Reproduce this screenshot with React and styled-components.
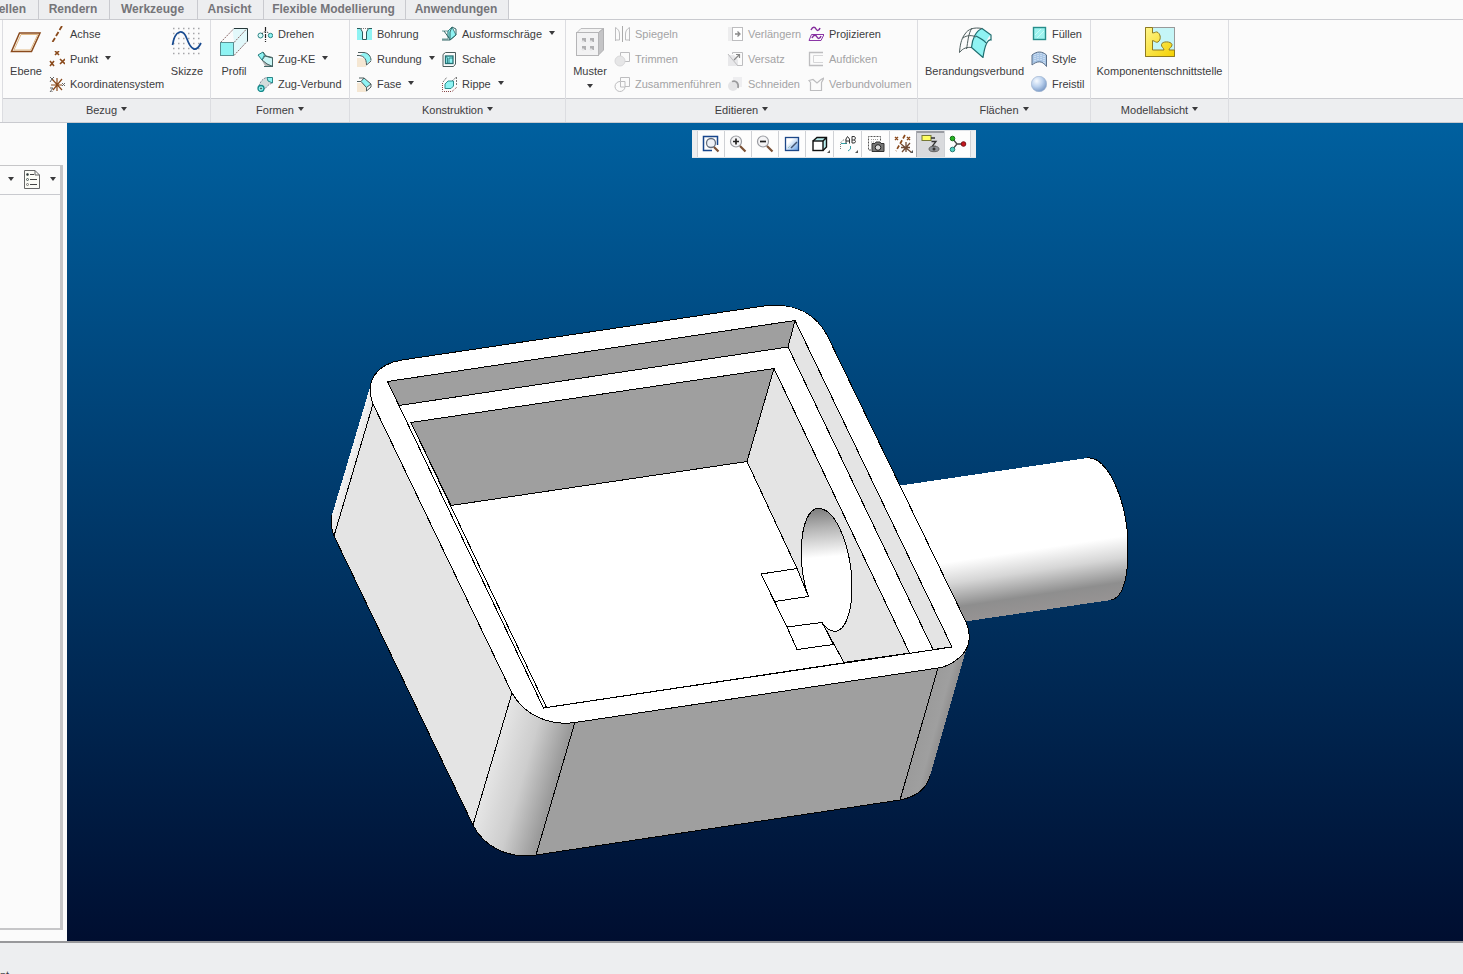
import React from 'react';
import styled, { createGlobalStyle, css } from 'styled-components';

const GlobalStyle = createGlobalStyle`
  * { box-sizing: border-box; }
  body {
    margin: 0;
    font-family: "Liberation Sans", Arial, sans-serif;
    font-size: 11px;
    color: #3c3c3e;
    background: #fbfbfb;
  }
  button { font: inherit; color: inherit; border: 0; padding: 0; margin: 0; background: none; }
  svg { display: block; flex: none; }
`;

const line = '#c9cacf';
const panel = '#edeef0';
const paper = '#fbfbfb';

const Window = styled.div`
  display: flex;
  flex-direction: column;
  height: 100vh;
  overflow: hidden;
`;

/* ---------- tabs ---------- */
const TabBar = styled.nav`
  display: flex;
  flex: none;
  height: 20px;
  border-bottom: 1px solid ${line};
  background: ${paper};
`;
const Tab = styled.button`
  flex: none;
  width: ${(p) => p.$width}px;
  height: 19px;
  padding: 0 ${(p) => (p.$cut ? 12 : 2)}px 2px 0;
  display: flex;
  align-items: center;
  justify-content: ${(p) => (p.$cut ? 'flex-end' : 'center')};
  border-right: 1px solid ${line};
  background: ${panel};
  color: #757579;
  font-size: 12px;
  font-weight: bold;
  white-space: nowrap;
`;

/* ---------- ribbon ---------- */
const Ribbon = styled.header`
  display: flex;
  flex: none;
  height: 103px;
  padding-left: 2px;
  background: ${paper};
  border-bottom: 1px solid ${line};
`;
const Group = styled.section`
  flex: none;
  display: flex;
  flex-direction: column;
  width: ${(p) => p.$width}px;
  border-right: 1px solid #dcdde1;
  &:first-child { border-left: 1px solid #dcdde1; }
`;
const GroupBody = styled.div`
  display: flex;
  height: 78px;
  padding: 1px 0 0 ${(p) => p.$indent || 0}px;
`;
const GroupLabel = styled.button`
  flex: 1;
  display: flex;
  align-items: center;
  justify-content: center;
  gap: 4px;
  padding-bottom: 2px;
  border-top: 1px solid ${line};
  background: ${panel};
`;
const RibbonRest = styled.div`
  flex: 1;
  margin-top: 78px;
  border-top: 1px solid ${line};
  background: ${panel};
`;
const Big = styled.button`
  flex: none;
  width: ${(p) => p.$width}px;
  display: flex;
  flex-direction: column;
  align-items: center;
  padding-top: 5px;
  gap: 6px;
  line-height: 14px;
  white-space: nowrap;
`;
const Column = styled.div`
  flex: none;
  width: ${(p) => p.$width}px;
  display: grid;
  grid-template-rows: repeat(3, 25px);
`;
const Small = styled.button`
  display: flex;
  align-items: center;
  gap: 5px;
  white-space: nowrap;
  ${(p) => p.disabled && css`color: #a3a3a5;`}
`;
const Caret = styled.span`
  width: 0;
  height: 0;
  margin: 0 0 2px ${(p) => p.$gap || 0}px;
  border: 3px solid transparent;
  border-top: 4px solid #3a3a3c;
  border-bottom: 0;
`;

/* ---------- work area ---------- */
const Work = styled.main`
  flex: 1;
  min-height: 0;
  display: flex;
`;
const Side = styled.aside`
  flex: none;
  width: 67px;
  padding: 42px 4px 11px 0;
  display: flex;
`;
const Tree = styled.div`
  flex: 1;
  border: solid #c6c6c8;
  border-width: 1px 3px 2px 0;
`;
const TreeTools = styled.div`
  height: 29px;
  display: flex;
  align-items: center;
  padding: 0 0 1px 8px;
  border-bottom: 1px solid ${line};
`;
const TreeButton = styled.button`
  display: flex;
  align-items: center;
  gap: 10px;
  & + & { margin-left: 10px; }
`;
const Viewport = styled.div`
  flex: 1;
  min-width: 0;
  position: relative;
  background: linear-gradient(#00609f, #000e30);
  & > svg { width: 100%; height: 100%; }
`;
const ViewTools = styled.div`
  position: absolute;
  top: 7px;
  left: 625px;
  height: 28px;
  display: flex;
  padding: 0 5px;
  background: ${panel};
  border: solid #dfe3e8;
  border-width: 1px 0;
`;
const ViewTool = styled.button`
  position: relative;
  width: ${(p) => (p.$wide ? 28 : 27)}px;
  display: flex;
  align-items: center;
  justify-content: center;
  border-left: 1px solid #cfd1d5;
  background: #fdfdfd;
  &:last-child { border-right: 1px solid #cfd1d5; }
  ${(p) => p.$active && css`
    background: #d9dadd;
    box-shadow: inset 0 2px 0 #9a9ca2;
    border-left-color: #a8aab0;
  `}
  ${(p) => p.$menu && css`
    &::after {
      content: "";
      position: absolute;
      right: 3px;
      bottom: 4px;
      border: solid transparent;
      border-width: 0 0 3px 3px;
      border-bottom-color: #555;
    }
  `}
`;
const Status = styled.footer`
  flex: none;
  height: 33px;
  padding-top: 26px;
  border-top: 2px solid #98989b;
  background: ${panel};
  overflow: hidden;
  line-height: 12px;
`;

/* ---------- icons ---------- */
const S = ({ size = 16, w, h, children }) => (
  <svg width={w || size} height={h || size} viewBox={`0 0 ${w || size} ${h || size}`} fill="none" stroke="#4c5c5c" strokeWidth="1" aria-hidden="true">
    {children}
  </svg>
);
const brown = '#8a4a1c';
const cyan = '#8ff3f3';
const g = '#bdbdbf';

const icons = {
  ebene: <S w={32} h={32}><path d="M9.500 7H30L21.500 25.500H1.500Z" stroke={brown} strokeWidth="1.500" /><path d="M11 8.500H27.800L20.500 24H4Z" stroke="#e0b884" strokeWidth="1" /></S>,
  achse: <S><path d="M13 0L10.500 4M9.500 6L7 10M6 12L3.500 16" stroke={brown} strokeWidth="1.800" /></S>,
  punkt: <S><path d="M6 0l4 4M10 0l-4 4M1 10l4 5M5 10l-4 5M11 8l5 5M16 8l-5 5" stroke={brown} strokeWidth="1.600" /></S>,
  koord: <S><path d="M3 3L13 14M13 3L4 14M2 9H13M8 2V15" stroke={brown} strokeWidth="1.200" /><path d="M1 1l2 2l2-2M3 3l-2 3M13 7l3 3M16 7l-3 3M1 12h3l-3 4h3" stroke="#666" /></S>,
  skizze: <S w={32} h={32}>
    {[2, 7, 12, 17, 22, 27].map((y) => <path key={y} d={`M2 ${y + .5}H31`} stroke="#a6a6aa" strokeDasharray="1.500 3.500" strokeWidth="1.500" />)}
    <path d="M1.500 19C4 4 12 2 16 13S25 27 30 17" stroke="#174a90" strokeWidth="1.700" /></S>,
  profil: <S w={32} h={32}><path d="M14.500 2.500H29.500V16L16 29V16.500Z" fill="#e2f8fa" stroke="none" /><path d="M2.500 16.500L16 2.500M16 16.500L29 2.500M16 29.500L29 15.500" stroke="#8b6b6b" strokeDasharray="2 1" /><path d="M16 2.500H29.500V15.500" stroke="#26383a" /><rect x="2.500" y="16.500" width="13" height="13" fill={cyan} stroke="#5a8f92" /></S>,
  drehen: <S><path d="M8.500 1V16" stroke="#222" strokeWidth="1.200" strokeDasharray="4 1 1 1" /><circle cx="3.500" cy="9.500" r="2.500" fill="#d8fafa" stroke="#2c8585" /><circle cx="13.500" cy="9.500" r="2.200" fill={cyan} stroke="#2c8585" /><path d="M5 8C6 5 11 5 12 8" stroke="#444" strokeDasharray="2 1" /></S>,
  zugke: <S><path d="M5 9L8 5L15.500 7V15.500L9 13Z" fill="#c9f5f5" /><path d="M4 8L11 13L15 15L8 15Z" fill="#b8b8b8" stroke="none" /><path d="M1 4L6 1L7.500 4L5 9Z" fill={cyan} stroke="#287f80" /><path d="M6 1L9 5L15.500 6.500V15.500L10 13L5 9M7 15.500h9" stroke="#466" /></S>,
  zugverb: <S><path d="M2 10C3 6 6 2 10 1.500H15.500V7C12 8 9 11 8 13Z" fill="#d4dcdc" stroke="#889" strokeDasharray="2 1" /><path d="M10 1.500H15.500V7L11 5Z" fill={cyan} stroke="#2a8788" /><circle cx="4" cy="12.500" r="3" fill={cyan} stroke="#16898a" strokeWidth="1.300" /><circle cx="4" cy="12.500" r=".6" fill="#144" /></S>,
  bohrung: <S><path d="M1 3H5L6 6V13H10.500V6L12 3H16V14H1Z" fill={cyan} stroke="none" /><path d="M6.500 6V13H10.500V6L12 3H5Z" fill="#fbfbfb" stroke="none" /><path d="M1 2.500H4.500L6.500 6V13.500H10.500V6L12.500 2.500H16" stroke="#2a5c5c" /><path d="M5 2.500H12" stroke="#777" strokeDasharray="1 1" /></S>,
  rundung: <S><path d="M1 7H7L10 10V16H1Z" fill="#f5e7d3" stroke="none" /><path d="M4 4L8 1.500C12 2 15 5 15 9L10.500 13C10.500 9 9 5 4 4Z" fill={cyan} stroke="none" /><path d="M2 1.500H8C12 2 15 5 15 9.500M1 4.500C7 4 10.500 7 10.500 14L15 10" /></S>,
  fase: <S><path d="M1 7H6L10 11V16H1Z" fill="#f5e7d3" stroke="none" /><path d="M5 5L8 2L15 8L10 12Z" fill={cyan} stroke="none" /><path d="M1 5.500H5L10.500 11.500V15L15 11V8L8 2H3M10.500 11.500L15 8M5 5.500L8 2" /></S>,
  auform: <S><path d="M1 5H7V13H1" stroke="#6a9a9a" /><path d="M7 5L11 1L15 9L9 14L7 10Z" fill={cyan} stroke="#3f8587" /><path d="M11 1L9 6V14M1 14H9L15 9M3 5L8 12M11 1L15 3V9" stroke="#366" /></S>,
  schale: <S><path d="M2 3.500L4.500 1.500H14.500V13L12.500 15.500H2Z" /><rect x="4.500" y="5" width="7.500" height="7.500" fill={cyan} stroke="#256f72" strokeWidth="1.300" /><path d="M6.500 12V7L4.500 5M12 7H8V12" stroke="#256f72" strokeWidth=".8" /></S>,
  rippe: <S><path d="M1.500 7V15.500H11L16 11" stroke="#844" strokeDasharray="1 1" /><path d="M2 6L6 1M15.500 1V10M11 5L15.500 1" stroke="#777" strokeDasharray="2 1" /><path d="M4 8L7 5H12.500V10L10 12.500H4Z" fill={cyan} stroke="#2c8f90" /></S>,
  muster: <S w={32} h={32}><path d="M2.500 7L7 2.500H29.500L24 7Z" fill="#f3f3f3" stroke={g} /><path d="M24 7L29.500 2.500V24L24 29.500Z" fill="#c4c4c6" stroke="#b0b0b2" /><rect x="2.500" y="6.500" width="22" height="23" fill="#f2f2f3" stroke="#b5b5b7" /><path d="M8 14h4M16 14h4M8 22h4M16 22h4" stroke="#b0b0b2" strokeWidth="4" /><path d="M8 15h2v1h-2zM16 15h2v1h-2zM8 23h2v1h-2zM16 23h2v1h-2z" fill="#eee" stroke="#e4e4e6" /></S>,
  spiegeln: <S><path d="M8.500 0V16" stroke="#aaa" /><path d="M1.500 15V1.500C4 3 5.500 5 5.500 8V14H1.500M15.500 15V1.500C13 3 11.500 5 11.500 8V14H15.500" stroke={g} /></S>,
  trimmen: <S><path d="M6.500 5V1.500H15.500V10.500H10" stroke={g} /><circle cx="6" cy="10" r="5" fill="#e6e6e7" stroke="#d8d8da" /></S>,
  zusammen: <S><path d="M6.500 5.500V1.500H15.500V10.500H11M6.500 5.500H11V10.500" stroke={g} /><path d="M6 5.500A5 5 0 1 0 11 11H6.500V5.500" stroke={g} /></S>,
  verlaengern: <S><rect x="1" y="1" width="6" height="14" fill="#ededee" stroke="none" /><rect x="5.500" y="1.500" width="10" height="13" stroke={g} fill="#fff" /><path d="M8 8H12M10.500 5.500L13 8L10.500 10.500" stroke="#888" strokeWidth="1.300" /></S>,
  versatz: <S><path d="M1 4H7L11 9V15H1Z" fill="#e8e8ea" stroke="none" /><path d="M5.500 3V1.500H15.500V14.500H11M1 3l4 5l6 7" stroke={g} /><path d="M7 9L12 4M9 3.500H12.500V7" stroke="#888" strokeWidth="1.200" /></S>,
  schneiden: <S><rect x="6" y="1" width="9" height="10" fill="#eeeef0" stroke="none" /><circle cx="6" cy="10" r="5" fill="#e4e4e6" stroke="none" /><path d="M5 5.500C9 4 12 7 11 12" stroke="#9a9a9c" strokeWidth="1.700" /></S>,
  projizieren: <S><path d="M3 4C5 0 7 1 8 3S11 5 12 2" stroke="#842c9c" strokeWidth="1.500" /><path d="M3.500 8.500H16L13 14.500H1Z" stroke="#8a35a6" /><path d="M4 12C6 8 8 9 9 11S12 13 13 10" stroke="#842c9c" strokeWidth="1.500" /></S>,
  aufdicken: <S><path d="M15 1.500H1.500V14.500H15" stroke={g} strokeWidth="1.300" /><path d="M15 4.500H5.500V11.500H15" stroke="#d6d6d8" /></S>,
  volumen: <S><path d="M2.500 6.500L1 4.500L5 3.500L9 7L13 3.500L16 2L13.500 6.500V14.500H2.500Z" stroke={g} strokeWidth="1.200" /></S>,
  berandung: <S w={34} h={32}><path d="M24 2.500L33 9C30 11 27 15 25 31.500L13.500 21.500C14 13 18 5 24 2.500Z" fill={cyan} stroke="none" /><path d="M24 2.500L33 9V14C30 13 27 18 25 31.500L13.500 21.500C14 13 18 5 24 2.500ZM18 10C22 12 26 14 28 17" stroke="#1f6e70" strokeWidth="1.200" /><path d="M24 2.500C16 1 10 3 7 8C3 13 2 20 1.500 26.500C5 22 9 21 13.500 21.500M5 12C9 9 14 9 18 11M14 2C10 8 10 16 8.500 23" /></S>,
  fuellen: <S><rect x="2.500" y="1.500" width="12" height="12" fill="#9df3ef" stroke="#268d8a" strokeWidth="1.400" /><path d="M4 9L10 3M6 12L13 5" stroke="#c8fbf8" /></S>,
  style: <S><path d="M1 4C6 0 11 0 15.500 4V15C11 10 7 10 1 13Z" fill="#a9c6e6" stroke="none" /><path d="M1 4C6 0 11 0 15.500 4V15.500C11 9 6 10 1 14Z" stroke="#5b6f88" /><path d="M4 3V11M7 2V10M10 2V10M13 3V12" stroke="#e5effa" strokeDasharray="1 1" /></S>,
  freistil: <S><defs><radialGradient id="ball" cx=".35" cy=".3" r=".75"><stop offset="0" stopColor="#f6faff" /><stop offset=".5" stopColor="#bcd2ee" /><stop offset="1" stopColor="#7797c4" /></radialGradient></defs><circle cx="8" cy="8" r="7.700" fill="url(#ball)" stroke="#9ab0cd" strokeWidth=".6" /></S>,
  komponente: <S w={32} h={32}><defs><linearGradient id="gold" x1="0" y1="0" x2="1" y2="1"><stop offset="0" stopColor="#fff68c" /><stop offset="1" stopColor="#f4d000" /></linearGradient></defs><rect x="1.500" y="1.500" width="29" height="29" fill="#c5f6f7" stroke="#999" /><path d="M1.500 1.500H8.500V7C11 7 12 5 14 6.500C17 9 17 14 14 16C12 17 11 15 8.500 14.500V24H20C20 22 17 21 17.500 18.500C18 15 27 15 28 18.500C28.500 21 25 22 25 24H30.500V30.500H1.500Z" fill="url(#gold)" stroke="#8f7b20" /></S>,
  liste: <S w={16} h={20}><path d="M.5 .5H11L15.500 5V18.500H.5Z" fill="#fcfcf6" stroke="#666" /><path d="M11 .5V5H15.500" stroke="#666" /><path d="M6 4.500H10M6 9.500H13M6 14.500H13" stroke="#444" /><circle cx="3.500" cy="4.500" r="1" fill="#333" /><circle cx="3.500" cy="9.500" r="1" /><circle cx="3.500" cy="14.500" r="1" stroke="#777" /></S>,
  refit: <S size={18}><path d="M15.500 10V1.500H1.500V15.500H10" stroke="#17458c" strokeWidth="1.500" /><circle cx="9" cy="8" r="4.500" fill="#eef1f6" stroke="#667080" strokeWidth="1.300" /><path d="M12 12L16.500 16.500" stroke="#7b5136" strokeWidth="2.200" /></S>,
  zoomin: <S size={18}><circle cx="7" cy="6.500" r="5.500" fill="#f4f4f6" stroke="#9a9ca2" strokeWidth="1.200" /><path d="M4 6.500H10M7 3.500V9.500" stroke="#222" strokeWidth="1.700" /><path d="M11 11L16.500 16.500" stroke="#7b5136" strokeWidth="2.200" /></S>,
  zoomout: <S size={18}><circle cx="7" cy="6.500" r="5.500" fill="#f4f4f6" stroke="#9a9ca2" strokeWidth="1.200" /><path d="M4 6.500H10" stroke="#222" strokeWidth="1.700" /><path d="M11 11L16.500 16.500" stroke="#7b5136" strokeWidth="2.200" /></S>,
  repaint: <S size={18}><defs><linearGradient id="blue" x1="0" y1="0" x2="1" y2="1"><stop offset=".3" stopColor="#fff" /><stop offset="1" stopColor="#5f9be4" /></linearGradient></defs><rect x="2.500" y="2.500" width="13" height="13" fill="url(#blue)" stroke="#1d4788" strokeWidth="1.300" /><path d="M8 13L14 7" stroke="#42536f" strokeWidth="1.500" /><path d="M5 13l3-3" stroke="#8ba" strokeDasharray="1 1" /></S>,
  cube: <S size={18}><path d="M2 6L6 2.500H15.500V12L12 15.500Z" fill="#b8eeee" stroke="none" /><rect x="2" y="6" width="10" height="9.500" fill="#fff" stroke="#111" strokeWidth="1.400" /><path d="M2 6L6 2.500H15.500V12L12 15.500M12 6L15.500 2.500" stroke="#111" strokeWidth="1.400" /></S>,
  saved: <S size={18}><path d="M1.500 14V8L4 5H7" stroke="#777" strokeDasharray="1 1" /><path d="M2 8.500H8M11.500 11V14L9 16" stroke="#36a0a6" /><path d="M7 8.500V4L8.500 1.500L10.500 4V8.500M7 6H10.500M13 8V1.500H15.500L16.500 3L15.500 5H13M15.500 5L16.500 6.500L15.500 8H13" stroke="#333" /></S>,
  camera: <S size={18}><path d="M4 15H1.500V1.500H13.500V6" stroke="#555" strokeDasharray="2 1" /><path d="M4 4.500h7M4 7h3" stroke="#999" strokeDasharray="1 1" /><path d="M5 8.500H8L9 7H13L14 8.500H17V16.500H5Z" fill="#777" stroke="#333" /><circle cx="11" cy="12.500" r="2.800" fill="#ddd" stroke="#222" /></S>,
  datum: <S size={20}><path d="M12 1L3 17" stroke={brown} strokeWidth="1.700" strokeDasharray="4 2" /><path d="M2 3l3 3M5 3l-3 3M14 3l3 3M17 3l-3 3" stroke={brown} strokeWidth="1.400" /><path d="M8 10L18 18M17 9L9 18M13 8V18M8 13.500H17" stroke="#6f4a35" strokeWidth="1.300" /></S>,
  annot: <S size={20}><rect x="1" y="1.500" width="9" height="5" fill="#ffff62" stroke="#777a35" /><path d="M10 4H14M10.500 7.500H15L11 12.500H15" stroke="#333" strokeWidth="1.300" /><ellipse cx="13" cy="15" rx="5" ry="2.700" fill="#8e9298" stroke="#666" /><circle cx="13" cy="15" r="1.500" fill="#333" stroke="none" /></S>,
  spin: <S size={18}><path d="M3 3L8 9L3 15M8 9H14" stroke="#444" strokeWidth="1.300" /><circle cx="3.500" cy="3.500" r="2.300" fill="#24b322" stroke="#17701a" /><circle cx="3.500" cy="14.500" r="2.300" fill="#52cfbd" stroke="#267b76" /><circle cx="14.500" cy="9" r="2.300" fill="#c5151d" stroke="#791217" /></S>,
};

const Tool = ({ icon, label, menu, off }) => (
  <Small disabled={off}>
    {icons[icon]}
    {label}
    {menu && <Caret $gap={2} />}
  </Small>
);

const tabs = [['ellen', 39], ['Rendern', 71], ['Werkzeuge', 88], ['Ansicht', 66], ['Flexible Modellierung', 142], ['Anwendungen', 103]];

const viewTools = [
  { icon: 'refit', label: 'Neu einpassen' }, { icon: 'zoomin', label: 'Vergrößern' },
  { icon: 'zoomout', label: 'Verkleinern' }, { icon: 'repaint', label: 'Bildaufbau' },
  { icon: 'cube', label: 'Darstellungsstil', menu: true, wide: true }, { icon: 'saved', label: 'Gespeicherte Ansichten', menu: true, wide: true },
  { icon: 'camera', label: 'Ansichtsmanager', wide: true }, { icon: 'datum', label: 'Bezugsanzeige', menu: true },
  { icon: 'annot', label: 'Anmerkungsanzeige', active: true, wide: true }, { icon: 'spin', label: 'Drehzentrum' },
];

/* Shaded housing with a connector pipe */
const Model = () => (
  <svg viewBox="67 123 1396 818" role="img" aria-label="3D-Modell" stroke="#000" strokeWidth="1" fill="none" shapeRendering="crispEdges">
    <defs>
      <linearGradient id="pipe" gradientUnits="userSpaceOnUse" x1="950" y1="562" x2="959" y2="622">
        <stop offset="0" stopColor="#fff" /><stop offset=".35" stopColor="#d6d6d6" /><stop offset=".75" stopColor="#8e8e8e" /><stop offset="1" stopColor="#969393" />
      </linearGradient>
      <linearGradient id="bore" gradientUnits="userSpaceOnUse" x1="822" y1="508" x2="826" y2="557">
        <stop offset="0" stopColor="#7d7d7d" /><stop offset=".4" stopColor="#b4b4b4" /><stop offset="1" stopColor="#fff" />
      </linearGradient>
      <linearGradient id="frontCorner" gradientUnits="userSpaceOnUse" x1="494" y1="760" x2="556" y2="778">
        <stop offset="0" stopColor="#e4e4e4" /><stop offset=".5" stopColor="#cdcdcd" /><stop offset="1" stopColor="#9a9a9a" />
      </linearGradient>
      <linearGradient id="rightCorner" gradientUnits="userSpaceOnUse" x1="918" y1="735" x2="947" y2="743">
        <stop offset="0" stopColor="#9b9b9b" /><stop offset=".5" stopColor="#9f9f9f" /><stop offset="1" stopColor="#858383" />
      </linearGradient>
      <linearGradient id="leftCorner" gradientUnits="userSpaceOnUse" x1="345" y1="462" x2="355" y2="465">
        <stop offset="0" stopColor="#f8f8f8" /><stop offset="1" stopColor="#e6e6e6" />
      </linearGradient>
    </defs>

    <path d="M890 487L1087 458C1107 455 1128 500 1128 548C1128 580 1122 598 1111 600L955 623Z" fill="url(#pipe)" stroke="none" />
    <path d="M1087 458C1107 455 1128 500 1128 548C1128 580 1122 598 1111 600" />

    <path d="M370 387L332 515C330 524 332 530 334 536L373 404Z" fill="url(#leftCorner)" stroke="none" />
    <path d="M332 515C330 524 332 530 334 536" />
    <path d="M373 404L334 536L473 825L512 693Z" fill="#e4e4e4" />
    <path d="M512 693L473 825C484 847 508 859 536 855L575 722Z" fill="url(#frontCorner)" />
    <path d="M575 722L536 855L900 800L938 668Z" fill="#9f9f9f" />
    <path d="M938 668L900 800C916 797 926 790 930 776L966 650Z" fill="url(#rightCorner)" stroke="none" />
    <path d="M938 668L900 800C916 797 926 790 930 776" />

    <path d="M402 360L757 307C790 301 814 311 827 335L966 622C972 635 970 649 959 658C953 663 946 667 938 668L575 722.500C550 726 525 716 512 693L373 404C364 381 377 364 402 360Z" fill="#fff" />
    <path d="M387.500 381.500L795 320.500L952 647L543.500 708Z" fill="#fff" />
    <path d="M387.500 381.500L795 320.500L788 347L399 405.500Z" fill="#9f9f9f" />
    <path d="M795 320.500L952 647L933 649.500L788 347Z" fill="#e4e4e4" />
    <path d="M411 422.500L774 368.500L909.500 653L546.500 707.500Z" fill="#fff" />
    <path d="M411 422.500L774 368.500L747 461.500L451 505.500Z" fill="#9f9f9f" />
    <path d="M774 368.500L909.500 653L844 662.500L822 622.500L808.500 596.500L797 568.500L747 461.500Z" fill="#e4e4e4" stroke="none" />
    <path d="M774 368.500L747 461.500L797 568.500M822 622.500L844 662.500" />
    <path d="M774 368.500L909.500 653L844 662.500" />
    <path d="M808.500 596.500C803 582 801 564 801.500 548C802 524 809 507 820 508.500C838 511 852 552 852 587C852 613 845 631 835 631.500C829 631 825 627 822 622.500Z" fill="url(#bore)" stroke="none" />
    <path d="M808.500 596.500C803 582 801 564 801.500 548C802 524 809 507 820 508.500C838 511 852 552 852 587C852 613 845 631 835 631.500C829 631 825 627 822 622.500" />
    <path d="M761 574L797 568.500L808.500 596.500L774.500 601.500ZM774.500 601.500L787 627L822 622.500L833.500 644.500L797 649.500L787 627" />
  </svg>
);

export default function App() {
  return (
    <Window>
      <GlobalStyle />
      <TabBar>
        {tabs.map(([label, width], i) => <Tab key={label} $width={width} $cut={i === 0}>{label}</Tab>)}
      </TabBar>
      <Ribbon>
        <Group $width={209}>
          <GroupBody>
            <Big $width={46}>{icons.ebene}Ebene</Big>
            <Column $width={116}>
              <Tool icon="achse" label="Achse" />
              <Tool icon="punkt" label="Punkt" menu />
              <Tool icon="koord" label="Koordinatensystem" />
            </Column>
            <Big $width={44}>{icons.skizze}Skizze</Big>
          </GroupBody>
          <GroupLabel>Bezug<Caret /></GroupLabel>
        </Group>
        <Group $width={139}>
          <GroupBody>
            <Big $width={46}>{icons.profil}Profil</Big>
            <Column $width={92}>
              <Tool icon="drehen" label="Drehen" />
              <Tool icon="zugke" label="Zug-KE" menu />
              <Tool icon="zugverb" label="Zug-Verbund" />
            </Column>
          </GroupBody>
          <GroupLabel>Formen<Caret /></GroupLabel>
        </Group>
        <Group $width={216}>
          <GroupBody $indent={6}>
            <Column $width={85}>
              <Tool icon="bohrung" label="Bohrung" />
              <Tool icon="rundung" label="Rundung" menu />
              <Tool icon="fase" label="Fase" menu />
            </Column>
            <Column $width={120}>
              <Tool icon="auform" label="Ausformschräge" menu />
              <Tool icon="schale" label="Schale" />
              <Tool icon="rippe" label="Rippe" menu />
            </Column>
          </GroupBody>
          <GroupLabel>Konstruktion<Caret /></GroupLabel>
        </Group>
        <Group $width={352}>
          <GroupBody>
            <Big $width={48}>{icons.muster}Muster<Caret /></Big>
            <Column $width={113}>
              <Tool icon="spiegeln" label="Spiegeln" off />
              <Tool icon="trimmen" label="Trimmen" off />
              <Tool icon="zusammen" label="Zusammenführen" off />
            </Column>
            <Column $width={81}>
              <Tool icon="verlaengern" label="Verlängern" off />
              <Tool icon="versatz" label="Versatz" off />
              <Tool icon="schneiden" label="Schneiden" off />
            </Column>
            <Column $width={104}>
              <Tool icon="projizieren" label="Projizieren" />
              <Tool icon="aufdicken" label="Aufdicken" off />
              <Tool icon="volumen" label="Verbundvolumen" off />
            </Column>
          </GroupBody>
          <GroupLabel>Editieren<Caret /></GroupLabel>
        </Group>
        <Group $width={173}>
          <GroupBody>
            <Big $width={113}>{icons.berandung}Berandungsverbund</Big>
            <Column $width={56}>
              <Tool icon="fuellen" label="Füllen" />
              <Tool icon="style" label="Style" />
              <Tool icon="freistil" label="Freistil" />
            </Column>
          </GroupBody>
          <GroupLabel>Flächen<Caret /></GroupLabel>
        </Group>
        <Group $width={138}>
          <GroupBody>
            <Big $width={137}>{icons.komponente}Komponentenschnittstelle</Big>
          </GroupBody>
          <GroupLabel>Modellabsicht<Caret /></GroupLabel>
        </Group>
        <RibbonRest />
      </Ribbon>
      <Work>
        <Side>
          <Tree>
            <TreeTools>
              <TreeButton aria-label="Einstellungen"><Caret /></TreeButton>
              <TreeButton aria-label="Anzeigen">{icons.liste}<Caret /></TreeButton>
            </TreeTools>
          </Tree>
        </Side>
        <Viewport>
          <Model />
          <ViewTools role="toolbar">
            {viewTools.map((t) => (
              <ViewTool key={t.icon} aria-label={t.label} $menu={t.menu} $wide={t.wide} $active={t.active}>{icons[t.icon]}</ViewTool>
            ))}
          </ViewTools>
        </Viewport>
      </Work>
      <Status>nt</Status>
    </Window>
  );
}
